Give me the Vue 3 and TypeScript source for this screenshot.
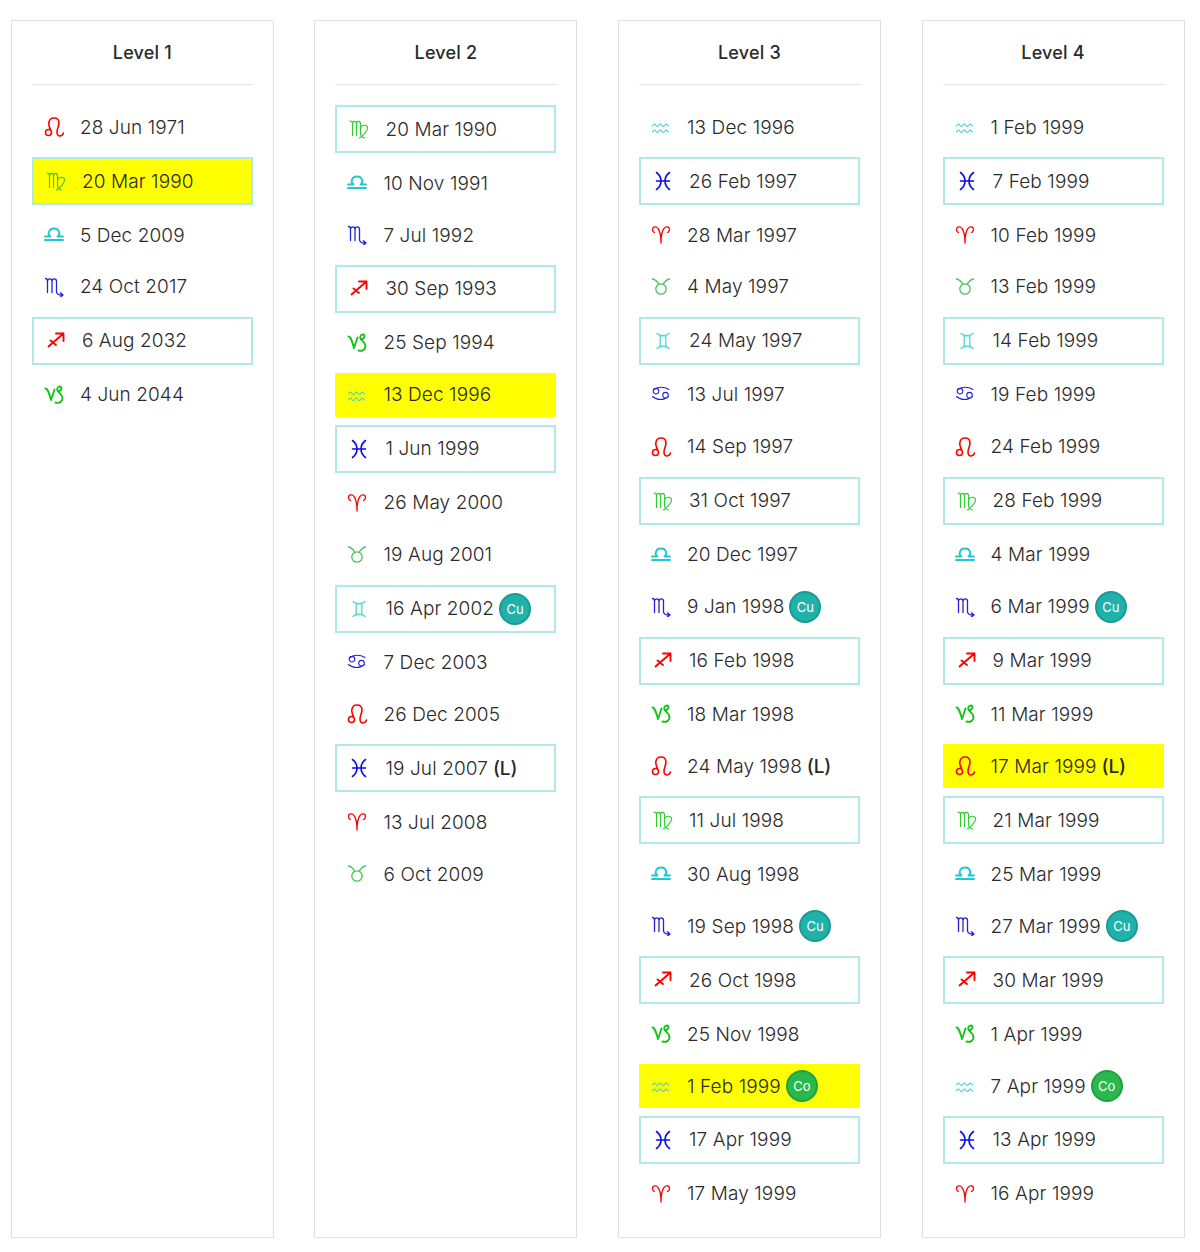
<script setup lang="ts">
type Sign = 'ari' | 'tau' | 'gem' | 'can' | 'leo' | 'vir' | 'lib' | 'sco' | 'sag' | 'cap' | 'aqu' | 'pis'
interface Entry { sign: Sign; date: string; hot?: boolean; lord?: boolean; tag?: 'Cu' | 'Co' }

const circle = (x: number, y: number, r: number) => `M${x - r} ${y}a${r} ${r} 0 1 0 ${2 * r} 0a${r} ${r} 0 1 0 ${-2 * r} 0`

const glyphs: Record<Sign, string> = {
  ari: 'M10 18C10 12 9 6 7 3.5C5.5 1.2 1.5 1.2 1.5 4.5C1.5 6 2.5 7 3.5 7.5M10 18C10 12 11 6 13 3.5C14.5 1.2 18.5 1.2 18.5 4.5C18.5 6 17.5 7 16.5 7.5',
  tau: 'M1.5 2C5 2.5 6.5 5 8 7.5M18.5 2C15 2.5 13.5 5 12 7.5' + circle(10, 12, 5.2),
  gem: 'M4 2.5C7 5.5 13 5.5 16 2.5M4 17.5C7 14.5 13 14.5 16 17.5M7.2 4.5V15.5M12.8 4.5V15.5',
  can: 'M2.5 5C6 1.5 13 1.5 18 4.5M17.5 11.5C13 15.5 6 15.5 1.5 11.5' + circle(5, 6.2, 2.8) + circle(14.5, 10.2, 2.8),
  leo: 'M6.8 13.5C5.5 10 4.5 8.5 4.8 6C5.2 2.5 7.5 1 10 1C13 1 15 3 15 6C15 9 13 11.5 13 15C13 17.5 14.5 19 16 19C17.8 19 19 17.5 19.5 16' + circle(4.5, 15.5, 3),
  vir: 'M1 2C2.5 2 3.5 3 3.5 5V16.5M3.5 5C3.5 1.5 7.5 1.5 7.5 5V16.5M7.5 5C7.5 1.5 11.5 1.5 11.5 5V14C11.5 17 13.5 18.5 15.5 19M11.5 8.5C13.5 5.5 18.5 5.5 18.5 9C18.5 13 14.5 16 10.5 19',
  lib: 'M1 11.5H6.5C3.5 10.5 4 3.5 10 3.5C16 3.5 16.5 10.5 13.5 11.5H19M1 15H19',
  sco: 'M1.5 1.5C3 1.5 3.5 2.5 3.5 4.5V15.5M3.5 4.5C3.5 1 8 1 8 4.5V15.5M8 4.5C8 1 12.5 1 12.5 4.5V14.5C12.5 17 14.5 18 18 18M16.5 15.8L19 18L16.5 20',
  sag: 'M2.5 15.5L17.5 2.5M10 2.5H17.5V10M4.5 9.5L10 14',
  cap: 'M1.5 3.5C3.5 3.5 4.5 6 7 15L10.5 4.5M16 1.5C13 1.5 12.5 5 14 6.5C15.5 8 18.5 10 18.5 13.2C18.5 16.5 15 18.8 11.5 17.5M16 1.5C18.3 1.5 18 6 14 6.5',
  aqu: 'M1.5 9C3 6.5 4 6.5 5 8.5C6 10 7 10 8 8C9 6.5 10 6.5 11 8.5C12 10 13 10 14 8C15 6.5 16 7 17.5 9M1.5 15C3 12.5 4 12.5 5 14.5C6 16 7 16 8 14C9 12.5 10 12.5 11 14.5C12 16 13 16 14 14C15 12.5 16 13 17.5 15',
  pis: 'M3.5 1.5C9.5 6 9.5 14 3.5 18.5M16.5 1.5C10.5 6 10.5 14 16.5 18.5M3.5 10H16.5',
}

const boxed: Sign[] = ['gem', 'vir', 'sag', 'pis']

const levels: { title: string; items: Entry[] }[] = [
  { title: 'Level 1', items: [
    { sign: 'leo', date: '28 Jun 1971' },
    { sign: 'vir', date: '20 Mar 1990', hot: true },
    { sign: 'lib', date: '5 Dec 2009' },
    { sign: 'sco', date: '24 Oct 2017' },
    { sign: 'sag', date: '6 Aug 2032' },
    { sign: 'cap', date: '4 Jun 2044' },
  ] },
  { title: 'Level 2', items: [
    { sign: 'vir', date: '20 Mar 1990' },
    { sign: 'lib', date: '10 Nov 1991' },
    { sign: 'sco', date: '7 Jul 1992' },
    { sign: 'sag', date: '30 Sep 1993' },
    { sign: 'cap', date: '25 Sep 1994' },
    { sign: 'aqu', date: '13 Dec 1996', hot: true },
    { sign: 'pis', date: '1 Jun 1999' },
    { sign: 'ari', date: '26 May 2000' },
    { sign: 'tau', date: '19 Aug 2001' },
    { sign: 'gem', date: '16 Apr 2002', tag: 'Cu' },
    { sign: 'can', date: '7 Dec 2003' },
    { sign: 'leo', date: '26 Dec 2005' },
    { sign: 'pis', date: '19 Jul 2007', lord: true },
    { sign: 'ari', date: '13 Jul 2008' },
    { sign: 'tau', date: '6 Oct 2009' },
  ] },
  { title: 'Level 3', items: [
    { sign: 'aqu', date: '13 Dec 1996' },
    { sign: 'pis', date: '26 Feb 1997' },
    { sign: 'ari', date: '28 Mar 1997' },
    { sign: 'tau', date: '4 May 1997' },
    { sign: 'gem', date: '24 May 1997' },
    { sign: 'can', date: '13 Jul 1997' },
    { sign: 'leo', date: '14 Sep 1997' },
    { sign: 'vir', date: '31 Oct 1997' },
    { sign: 'lib', date: '20 Dec 1997' },
    { sign: 'sco', date: '9 Jan 1998', tag: 'Cu' },
    { sign: 'sag', date: '16 Feb 1998' },
    { sign: 'cap', date: '18 Mar 1998' },
    { sign: 'leo', date: '24 May 1998', lord: true },
    { sign: 'vir', date: '11 Jul 1998' },
    { sign: 'lib', date: '30 Aug 1998' },
    { sign: 'sco', date: '19 Sep 1998', tag: 'Cu' },
    { sign: 'sag', date: '26 Oct 1998' },
    { sign: 'cap', date: '25 Nov 1998' },
    { sign: 'aqu', date: '1 Feb 1999', hot: true, tag: 'Co' },
    { sign: 'pis', date: '17 Apr 1999' },
    { sign: 'ari', date: '17 May 1999' },
  ] },
  { title: 'Level 4', items: [
    { sign: 'aqu', date: '1 Feb 1999' },
    { sign: 'pis', date: '7 Feb 1999' },
    { sign: 'ari', date: '10 Feb 1999' },
    { sign: 'tau', date: '13 Feb 1999' },
    { sign: 'gem', date: '14 Feb 1999' },
    { sign: 'can', date: '19 Feb 1999' },
    { sign: 'leo', date: '24 Feb 1999' },
    { sign: 'vir', date: '28 Feb 1999' },
    { sign: 'lib', date: '4 Mar 1999' },
    { sign: 'sco', date: '6 Mar 1999', tag: 'Cu' },
    { sign: 'sag', date: '9 Mar 1999' },
    { sign: 'cap', date: '11 Mar 1999' },
    { sign: 'leo', date: '17 Mar 1999', hot: true, lord: true },
    { sign: 'vir', date: '21 Mar 1999' },
    { sign: 'lib', date: '25 Mar 1999' },
    { sign: 'sco', date: '27 Mar 1999', tag: 'Cu' },
    { sign: 'sag', date: '30 Mar 1999' },
    { sign: 'cap', date: '1 Apr 1999' },
    { sign: 'aqu', date: '7 Apr 1999', tag: 'Co' },
    { sign: 'pis', date: '13 Apr 1999' },
    { sign: 'ari', date: '16 Apr 1999' },
  ] },
]
</script>

<template>
  <div class="page">
    <section v-for="level in levels" :key="level.title" class="card">
      <h2 class="title">{{ level.title }}</h2>
      <ul class="list">
        <li
          v-for="item in level.items"
          :key="item.date"
          class="row"
          :class="{ boxed: boxed.includes(item.sign), hot: item.hot }"
        >
          <svg class="icon" :class="item.sign" viewBox="0 0 20 20" width="20" height="20" fill="none" stroke="currentColor" stroke-linecap="round" stroke-linejoin="round">
            <path :d="glyphs[item.sign]" />
          </svg>
          <span class="date">{{ item.date }}</span>
          <b v-if="item.lord" class="lord">(L)</b>
          <span v-if="item.tag" class="tag" :class="item.tag">{{ item.tag }}</span>
        </li>
      </ul>
    </section>
  </div>
</template>

<style>
html, body { margin: 0; background: #fff; }
</style>

<style scoped>
.page {
  box-sizing: border-box;
  width: 1200px;
  height: 1252px;
  padding: 20px 0 14px 10.9px;
  display: grid;
  grid-template-columns: repeat(4, 263px);
  column-gap: 40.55px;
  font-family: Inter, "Open Sans", sans-serif;
  color: #2a2a2a;
}
.card {
  box-sizing: border-box;
  border: 1px solid #e0e0e0;
  padding: 0 20px;
  min-width: 0;
}
.title {
  margin: 0;
  height: 64px;
  line-height: 63px;
  box-sizing: border-box;
  border-bottom: 1px solid #e4e4e4;
  text-align: center;
  font-size: 18px;
  font-weight: 500;
  letter-spacing: 0.2px;
  color: #2a2a2a;
}
.list {
  list-style: none;
  margin: 20.2px 0 0;
  padding: 0;
  display: flex;
  flex-direction: column;
  gap: 8px;
}
.row {
  box-sizing: border-box;
  height: 43.95px;
  padding: 0 12px;
  display: flex;
  align-items: center;
  font-size: 19px;
  font-weight: 300;
  letter-spacing: 0.1px;
  white-space: nowrap;
}
.row.boxed {
  height: 47.95px;
  border: 2px solid #b2e8e8;
}
.row.hot { background: #ff0; }
.icon {
  flex: none;
  margin-right: 16px;
  stroke-width: 1.3;
}
.date { display: block; }
.lord { margin-left: 5px; font-weight: 500; letter-spacing: -0.2px; }
.tag {
  flex: none;
  box-sizing: border-box;
  width: 32px;
  height: 32px;
  margin-left: 5px;
  border-radius: 50%;
  border: 2px solid #1a9a94;
  background: #20b2aa;
  color: #fff;
  font-size: 13px;
  font-weight: 400;
  letter-spacing: 0;
  display: flex;
  align-items: center;
  justify-content: center;
}
.tag.Co { background: #28b84c; border-color: #22a040; }

.ari, .leo, .sag { color: #f00; }
.tau { color: #45c45a; }
.vir { color: #2fcc2f; }
.cap { color: #16c416; }
.gem { color: #4fd8cc; }
.lib { color: #1fc9cf; }
.aqu { color: #3fd3c6; }
.can, .sco { color: #2222dd; }
.pis { color: #0a0ae6; }
.leo, .pis { stroke-width: 1.6; }
.sag, .lib, .cap { stroke-width: 1.9; }
.vir, .aqu, .can { stroke-width: 1.1; }
</style>
